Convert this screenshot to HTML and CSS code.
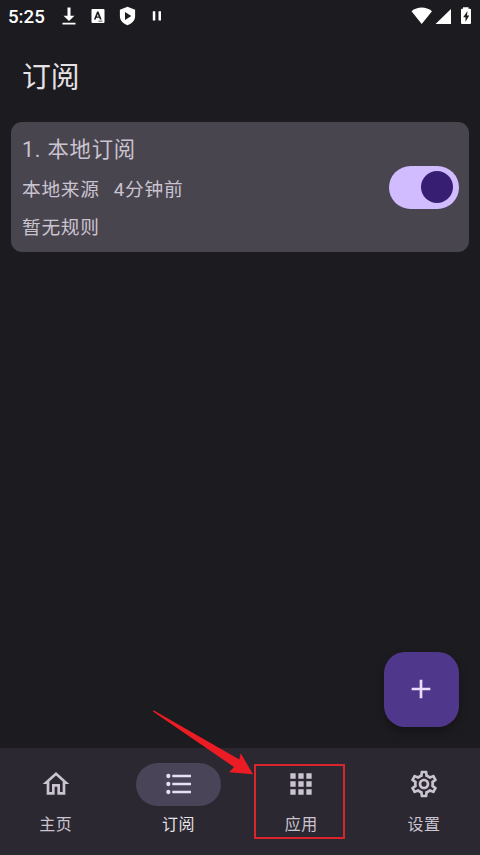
FILE: index.html
```
<!DOCTYPE html>
<html lang="zh-CN">
<head>
<meta charset="utf-8">
<title>订阅</title>
<link rel="stylesheet" href="styles.css">
</head>
<body>
<div class="screen">
  <div class="status">
    <span class="clock">5:25</span>
    <svg class="notices" width="110" height="24" viewBox="0 0 110 24" fill="#fff">
      <path d="M7.500 3.700h3v8.300h4L9 17.400 3.500 12h4zM2.500 19h13v1.700h-13z" transform="translate(0 3.700)"/>
      <path fill-rule="evenodd" d="M32.500 9h11q1 0 1 1V22q0 1-1 1h-11q-1 0-1-1V10Q31.500 9 32.500 9zM37.100 11.500l-3.200 8h1.900l.6-1.700h2.800l.6 1.700h1.900l-3.200-8zm.7 2.400l.9 2.500h-1.800zM38.500 20.800v.8h4v-.8z"/>
      <path fill-rule="evenodd" d="M67.500 6.800l7.600 2.900v6.500c0 4.300-3.200 7.300-7.600 9-4.400-1.700-7.600-4.700-7.600-9V9.700zM65 12v8l6.300-4z"/>
      <path d="M92.800 11.300h2.500v9.300h-2.500zM98.500 11.300h2.500v9.300h-2.500z"/>
    </svg>
    <svg class="system" width="64" height="24" viewBox="0 0 64 24" fill="#fff">
      <path d="M1.500 11.200C7.500 6.300 16 6.300 22 11.200L11.700 24z"/>
      <path d="M41 9v15H25.500z"/>
      <path fill-rule="evenodd" d="M53 7.300h5.500v1.500h1.500q1 0 1 1v13.200q0 1-1 1h-8q-1 0-1-1V9.800q0-1 1-1h1zM57.500 11l-4.300 6.300h2.300v4.500l3.800-6.300h-2.300z"/>
    </svg>
  </div>
  <header class="title">订阅</header>
  <main class="content">
    <section class="card">
      <div class="info">
        <div class="name">1. 本地订阅</div>
        <div class="meta"><span>本地来源</span><span>4分钟前</span></div>
        <div class="meta">暂无规则</div>
      </div>
      <div class="switch"><div class="thumb"></div></div>
    </section>
  </main>
  <div class="fab">
    <svg width="32" height="32" viewBox="0 0 24 24" fill="#eaddff"><path d="M19 13h-6v6h-2v-6H5v-2h6V5h2v6h6z"/></svg>
  </div>
  <nav class="nav">
    <div class="item">
      <div class="pill"><svg width="32" height="32" viewBox="0 0 24 24"><path d="M12 5.690l5 4.500V18h-2v-6H9v6H7v-7.810l5-4.500M12 3L2 12h3v8h6v-6h2v6h6v-8h3z"/></svg></div>
      <span>主页</span>
    </div>
    <div class="item active">
      <div class="pill"><svg width="32" height="32" viewBox="0 0 24 24"><path d="M7 5h14v2H7zM7 11h14v2H7zM7 17h14v2H7z"/><circle cx="4" cy="6" r="1.600"/><circle cx="4" cy="12" r="1.600"/><circle cx="4" cy="18" r="1.600"/></svg></div>
      <span>订阅</span>
    </div>
    <div class="item">
      <div class="pill"><svg width="32" height="32" viewBox="0 0 24 24"><path d="M4 8h4V4H4zm6 12h4v-4h-4zm-6 0h4v-4H4zm0-6h4v-4H4zm6 0h4v-4h-4zm6-10v4h4V4zm-6 4h4V4h-4zm6 6h4v-4h-4zm0 6h4v-4h-4z"/></svg></div>
      <span>应用</span>
    </div>
    <div class="item">
      <div class="pill"><svg width="32" height="32" viewBox="0 0 24 24"><path d="M19.430 12.980c.04-.32.07-.64.07-.98s-.03-.66-.07-.98l2.110-1.650c.19-.15.24-.42.12-.64l-2-3.460c-.09-.16-.26-.25-.44-.25-.06 0-.12.01-.17.03l-2.490 1c-.52-.4-1.080-.73-1.690-.98l-.38-2.650C14.460 2.180 14.250 2 14 2h-4c-.25 0-.46.18-.49.42l-.38 2.650c-.61.25-1.170.59-1.690.98l-2.490-1c-.06-.02-.12-.03-.18-.03-.17 0-.34.09-.43.25l-2 3.460c-.13.22-.07.49.12.64l2.110 1.650c-.04.32-.07.65-.07.98s.03.66.07.98l-2.110 1.650c-.19.15-.24.42-.12.64l2 3.460c.09.16.26.25.44.25.06 0 .12-.01.17-.03l2.490-1c.52.4 1.080.73 1.690.98l.38 2.650c.03.24.24.42.49.42h4c.25 0 .46-.18.49-.42l.38-2.650c.61-.25 1.170-.59 1.690-.98l2.490 1c.06.02.12.03.18.03.17 0 .34-.09.43-.25l2-3.460c.12-.22.07-.49-.12-.64zm-1.980-1.710c.04.31.05.52.05.73s-.02.43-.05.73l-.14 1.130.89.7 1.080.84-.7 1.210-1.270-.51-1.040-.42-.9.680c-.43.32-.84.56-1.250.73l-1.060.43-.16 1.130-.2 1.350h-1.400l-.19-1.350-.16-1.130-1.060-.43c-.43-.18-.83-.41-1.230-.71l-.91-.7-1.060.43-1.270.51-.7-1.210 1.080-.84.89-.7-.14-1.130c-.03-.31-.05-.54-.05-.74s.02-.43.05-.73l.14-1.130-.89-.7-1.080-.84.7-1.210 1.270.51 1.040.42.9-.68c.43-.32.84-.56 1.250-.73l1.060-.43.16-1.130.2-1.350h1.390l.19 1.350.16 1.130 1.060.43c.43.18.83.41 1.230.71l.91.7 1.060-.43 1.270-.51.7 1.210-1.070.85-.89.7zM12 8c-2.210 0-4 1.790-4 4s1.790 4 4 4 4-1.790 4-4-1.790-4-4-4m0 6c-1.100 0-2-.9-2-2s.9-2 2-2 2 .9 2 2-.9 2-2 2"/></svg></div>
      <span>设置</span>
    </div>
  </nav>
  <div class="highlight"></div>
  <svg class="arrow" width="102" height="66" viewBox="0 0 102 66"><path d="M1.500 .3L87.300 49.500 88.700 43.300 101 64.200 77.200 62.300 82 57 1 1.500Z" fill="#ec1c24"/></svg>
</div>
</body>
</html>
```
FILE: styles.css
```
* { box-sizing: border-box; }
body { margin: 0; background: #1c1b1f; }
.screen {
  position: relative;
  width: 480px;
  height: 855px;
  display: flex;
  flex-direction: column;
  overflow: hidden;
  background: #1c1b1f;
  color: #cac4d0;
  font-family: Roboto, "Noto Sans CJK SC", sans-serif;
}
.status { height: 32px; display: flex; align-items: flex-start; padding: 0 6px 0 8px; }
.clock { width: 52px; font-size: 18.700px; font-weight: 500; line-height: 34px; color: #fff; }
.notices { overflow: visible; }
.system { margin-left: auto; overflow: visible; }
.title { height: 90px; padding: 0 22px; font-size: 28.800px; line-height: 91px; color: #e6e1e5; font-weight: 400; }
.content { flex: 1; padding: 0 11px; }
.card {
  height: 130px;
  display: flex;
  align-items: center;
  justify-content: space-between;
  padding: 0 10px 0 11px;
  border-radius: 11px;
  background: #49454f;
}
.info { display: flex; flex-direction: column; gap: 11px; padding-top: 2px; }
.name { font-size: 21.300px; letter-spacing: .85px; line-height: 32px; }
.meta { display: flex; gap: 14px; font-size: 18.700px; letter-spacing: .75px; line-height: 27px; }
.switch { width: 70px; height: 43px; padding: 5px 6px 6px; border-radius: 22px; background: #d0bcff; display: flex; justify-content: flex-end; align-items: center; }
.thumb { width: 32px; height: 32px; border-radius: 50%; background: #381e72; }
.fab {
  width: 75px;
  height: 75px;
  align-self: flex-end;
  margin: 0 21px 21px 0;
  padding: 0 1px 1px 0;
  border-radius: 21px;
  background: #4f378b;
  box-shadow: 0 4px 8px rgba(0, 0, 0, .3);
  display: flex;
  align-items: center;
  justify-content: center;
}
.nav { height: 107px; display: flex; gap: 11px; padding-top: 15px; background: #2b2831; }
.item { flex: 1; display: flex; flex-direction: column; align-items: center; gap: 7px; font-size: 16px; letter-spacing: .67px; line-height: 23px; }
.pill { width: 85px; height: 43px; padding-bottom: 1px; border-radius: 22px; display: flex; align-items: center; justify-content: center; }
.pill svg { fill: #cac4d0; }
.active { color: #e6e1e5; }
.active .pill { background: #4a4458; }
.active svg { fill: #e8def8; }
.highlight { position: absolute; left: 254px; top: 764px; width: 91px; height: 75px; border: 2px solid #d9262d; }
.arrow { position: absolute; left: 152px; top: 710px; }
```
